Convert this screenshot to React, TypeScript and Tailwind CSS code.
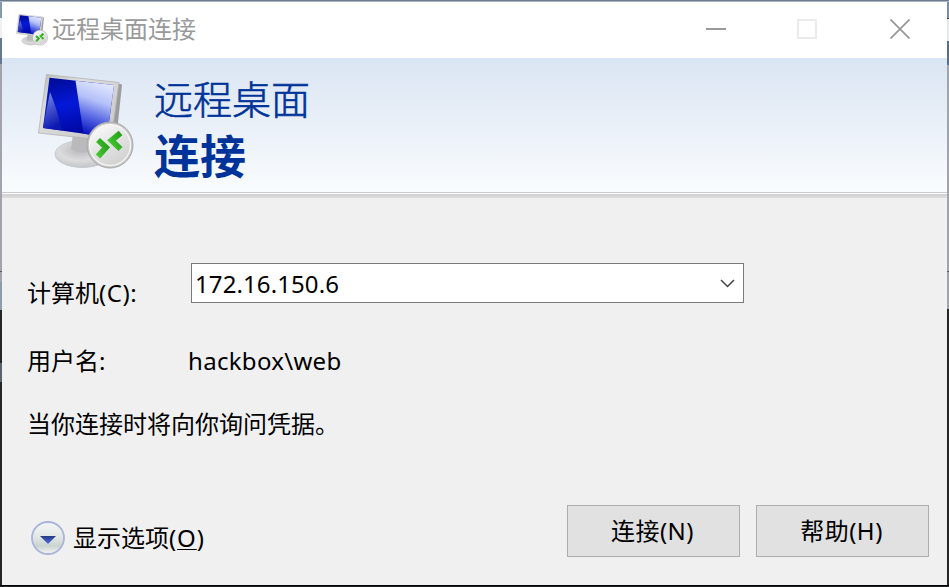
import React from "react";

const MonitorIcon: React.FC<{ className?: string }> = ({ className }) => (
  <svg viewBox="0 0 96 96" className={className} aria-hidden="true">
    <defs>
      <linearGradient id="frame" x1="0" y1="0" x2="1" y2="1">
        <stop offset="0%" stopColor="#b9b9b9" />
        <stop offset="30%" stopColor="#dedede" />
        <stop offset="100%" stopColor="#c4c4c4" />
      </linearGradient>
      <linearGradient id="screen" x1="0" y1="0" x2="0.3" y2="1">
        <stop offset="0%" stopColor="#000a90" />
        <stop offset="50%" stopColor="#0418d8" />
        <stop offset="100%" stopColor="#0008a0" />
      </linearGradient>
      <linearGradient id="shine" x1="0.6" y1="0" x2="0.35" y2="1">
        <stop offset="0%" stopColor="#e2e9ff" />
        <stop offset="35%" stopColor="#b4c0f8" />
        <stop offset="65%" stopColor="#5868e4" />
        <stop offset="95%" stopColor="#0c18c0" />
      </linearGradient>
      <linearGradient id="glint" x1="0" y1="0" x2="0.3" y2="1">
        <stop offset="0%" stopColor="#8090ec" />
        <stop offset="100%" stopColor="#0c18b0" />
      </linearGradient>
      <radialGradient id="base" cx="0.45" cy="0.35" r="0.65">
        <stop offset="0%" stopColor="#b8b8ba" />
        <stop offset="60%" stopColor="#dcdcde" />
        <stop offset="100%" stopColor="#c4c6c8" />
      </radialGradient>
      <linearGradient id="badge" x1="0" y1="0" x2="0.6" y2="1">
        <stop offset="0%" stopColor="#ffffff" />
        <stop offset="50%" stopColor="#e6e6e6" />
        <stop offset="100%" stopColor="#d2d2d2" />
      </linearGradient>
      <linearGradient id="chevron" x1="0" y1="1" x2="1" y2="0">
        <stop offset="0%" stopColor="#44c832" />
        <stop offset="100%" stopColor="#24a018" />
      </linearGradient>
    </defs>
    <ellipse cx="44.500" cy="80" rx="27.500" ry="13.500" fill="url(#base)" stroke="#c2c5c8" strokeWidth="0.800" />
    <path d="M35 60 L58 65 L58 77 Q44 81 33 75 Z" fill="#bababc" />
    <path d="M80 9.500 L84 10.500 L79 58 L70 66 Z" fill="#9b9b9d" />
    <path d="M8.500 0.500 L81 8.500 L73 67 L0.500 59 Z" fill="url(#frame)" stroke="#b4b4b4" strokeWidth="0.800" />
    <path d="M11.500 3.800 L76 11 L69 63 L5 54 Z" fill="url(#screen)" />
    <path d="M37.500 6.700 L76 11 L69 63 L45.500 59.700 Z" fill="url(#shine)" />
    <path d="M12 18 Q18 32 24 56.500 L5 54 Z" fill="url(#glint)" />
    <circle cx="72" cy="71" r="23" fill="#c6c6c6" stroke="#a8a8a8" strokeWidth="1" />
    <circle cx="72" cy="71" r="20.500" fill="url(#badge)" stroke="#f4f4f4" strokeWidth="1.400" />
    <path d="M60 66 L68 73.500 L60 82.500" fill="none" stroke="url(#chevron)" strokeWidth="5.800" />
    <path d="M82.500 59 L73.500 66.500 L82.500 75" fill="none" stroke="url(#chevron)" strokeWidth="5.800" />
  </svg>
);

const TitleBar: React.FC = () => (
  <div className="flex h-14 shrink-0 items-center bg-white pb-[2px] pl-[14px] pr-[37px]">
    <MonitorIcon className="mt-px size-8" />
    <span className="ml-[4px] flex-1 text-[24px] leading-8 text-[#999999]">远程桌面连接</span>
    <div className="flex items-center gap-[71px]">
      <svg width="20" height="20" viewBox="0 0 20 20" className="-ml-px">
        <path d="M0 10h20" stroke="#999999" strokeWidth="2" />
      </svg>
      <div className="size-5 border-2 border-[#ebebeb]" />
      <svg width="20" height="20" viewBox="0 0 20 20" className="ml-[2px]">
        <path d="M0.500 0.500l19 19M19.500 0.500l-19 19" stroke="#999999" strokeWidth="1.800" />
      </svg>
    </div>
  </div>
);

const Banner: React.FC = () => (
  <div className="flex h-[140px] shrink-0 flex-col">
    <div className="flex h-[134px] bg-linear-to-b from-[#dae5f3] via-[#eaf0f8] via-50% to-[#f9fcfe] pl-[36px]">
      <MonitorIcon className="mt-[16px] size-24 shrink-0" />
      <div className="ml-[20px] pt-[16px] text-[#003399]">
        <div className="text-[39px] font-light leading-[50px] [-webkit-text-stroke:0.6px_#003399]">远程桌面</div>
        <div className="mt-[3px] text-[46px] font-bold leading-[56px]">连接</div>
      </div>
    </div>
    <div className="h-px bg-[#c9c9cf]" />
    <div className="h-px bg-white" />
    <div className="h-[4px] bg-linear-to-b from-[#d0d0d0] to-[#dedede]" />
  </div>
);

const ComboBox: React.FC<{ value: string }> = ({ value }) => (
  <div className="flex h-10 w-[553px] items-center justify-between border border-[#7a7a7a] bg-white pl-[3px] pr-[8px]">
    <span className="pt-[2px] leading-8 tracking-[0.1px]">{value}</span>
    <svg width="15" height="9" viewBox="0 0 15 9">
      <path d="M1 1l6.500 6.500L14 1" fill="none" stroke="#444444" strokeWidth="1.500" />
    </svg>
  </div>
);

const PushButton: React.FC<{ children: React.ReactNode }> = ({ children }) => (
  <button className="h-[52px] w-[173px] border border-[#adadad] bg-[#e1e1e1] pr-[2px] leading-8 tracking-[0.5px]">
    {children}
  </button>
);

const App: React.FC = () => {
  return (
    <div className="flex h-[587px] w-[949px] flex-col bg-[#202124] font-['Noto_Sans','Noto_Sans_CJK_SC',sans-serif] text-[24px] text-black">
      <div className="h-px shrink-0 bg-[#71798a]" />
      <div className="h-px shrink-0 bg-[#a4b6ce]" />
      <div className="flex h-[583px]">
        <div className="w-[2px] bg-[linear-gradient(#8498b0_0_16px,#f0f0f2_16px_36px,#667990_36px_62px,#a3a3ad_62px_269px,#55585d_269px_270px,#a3a3ad_270px_280px,#8c9caa_280px_308px,#252526_308px_361px,#59636e_361px_380px,#252526_380px)]" />
        <div className="flex w-[945px] flex-col bg-[#f0f0f0]">
          <TitleBar />
          <Banner />
          <div className="flex h-[387px] flex-col pl-[25px] pr-[18px]">
            <div className="mt-[65px] flex h-10">
              <span className="w-[164px] pt-[14px] leading-8">
                计算机<span className="tracking-[0.6px]">(C):</span>
              </span>
              <ComboBox value="172.16.150.6" />
            </div>
            <div className="mt-[42px] flex h-8 leading-8">
              <span className="w-[161px]">用户名:</span>
              <span className="tracking-[0.3px]">hackbox\web</span>
            </div>
            <div className="mt-[31px] h-8 leading-8">当你连接时将向你询问凭据。</div>
            <div className="mt-[65px] flex h-[52px]">
              <div className="flex flex-1 pl-[4px] pt-[16px]">
                <svg width="34" height="34" viewBox="0 0 34 34">
                  <defs>
                    <linearGradient id="disc" x1="0" y1="0" x2="0" y2="1">
                      <stop offset="0%" stopColor="#f4f6f5" />
                      <stop offset="45%" stopColor="#e3e8e5" />
                      <stop offset="75%" stopColor="#ccd4cf" />
                      <stop offset="100%" stopColor="#f4f7f5" />
                    </linearGradient>
                    <linearGradient id="arrow" x1="0" y1="0" x2="0" y2="1">
                      <stop offset="0%" stopColor="#253a80" />
                      <stop offset="100%" stopColor="#4f6ff0" />
                    </linearGradient>
                  </defs>
                  <circle cx="17" cy="17" r="16" fill="url(#disc)" stroke="#a9b4dd" strokeWidth="1.800" />
                  <path d="M9 15h16l-8 8z" fill="url(#arrow)" />
                </svg>
                <span className="ml-[8px] pt-px leading-8">
                  显示选项
                  <span className="tracking-[0.9px]">
                    (<span className="underline decoration-1 underline-offset-2">O</span>)
                  </span>
                </span>
              </div>
              <div className="flex gap-4">
                <PushButton>连接(N)</PushButton>
                <PushButton>帮助(H)</PushButton>
              </div>
            </div>
          </div>
        </div>
        <div className="w-[2px] bg-[linear-gradient(#7890ac_0_16px,#333333_16px_17px,#e8e9ec_17px_39px,#5a6f86_39px_63px,#a3a3ad_63px_269px,#55585d_269px_270px,#a3a3ad_270px_307px,#252526_307px)]" />
      </div>
      <div className="h-px shrink-0 bg-black" />
    </div>
  );
};

export default App;
